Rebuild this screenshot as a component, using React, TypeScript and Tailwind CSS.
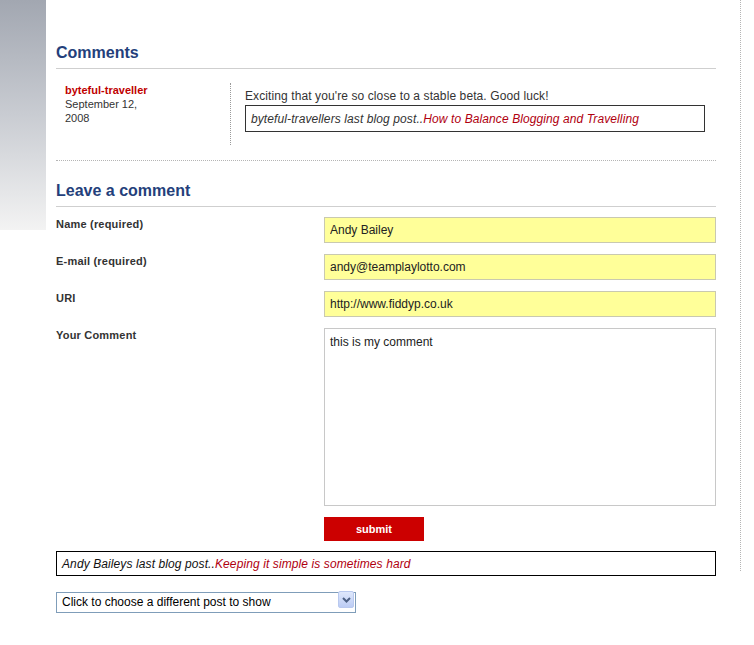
import { useState } from 'react';

export default function App() {
  const [name, setName] = useState('Andy Bailey');
  const [email, setEmail] = useState('andy@teamplaylotto.com');
  const [uri, setUri] = useState('http://www.fiddyp.co.uk');
  const [comment, setComment] = useState('this is my comment');

  return (
    <div className="w-[754px] min-h-[645px] bg-white flex items-start font-['Liberation_Sans',Arial,sans-serif] text-[#333]">
      {/* Left gradient strip */}
      <div className="w-[46px] h-[230px] shrink-0 bg-gradient-to-b from-[#a2a7b1] via-[#c9ccd2] to-[#f3f3f3]" />

      <div className="w-[695px] h-[571px] pl-[10px] pr-[24px] pt-[43px] border-r border-dotted border-[#b5b5b5]">
        {/* Comments */}
        <h2 className="text-[16px] leading-[20px] font-bold text-[#243f7b] pb-[5px] border-b border-[#cfcfcf]">Comments</h2>

        <div className="flex mt-[14px]">
          <div className="w-[175px] h-[62px] pl-[9px] border-r border-dotted border-[#9a9a9a] text-[11px] leading-[14px]">
            <div className="font-bold text-[#c00000]">byteful-traveller</div>
            <div>September 12,</div>
            <div>2008</div>
          </div>
          <div className="pl-[14px] pt-[5px]">
            <p className="text-[12px] leading-[16px] tracking-[0.1px]">Exciting that you're so close to a stable beta. Good luck!</p>
            <div className="mt-[1px] w-[460px] h-[27px] border border-[#333] pl-[5px] flex items-center text-[12px] italic tracking-[0.1px]">
              <span>byteful-travellers last blog post..</span>
              <span className="text-[#b0000f]">How to Balance Blogging and Travelling</span>
            </div>
          </div>
        </div>

        <div className="mt-[15px] border-t border-dotted border-[#b5b5b5]" />

        {/* Leave a comment */}
        <h2 className="mt-[20px] text-[16px] leading-[20px] font-bold text-[#243f7b] pb-[5px] border-b border-[#cfcfcf]">Leave a comment</h2>

        <div className="mt-[10px] flex flex-col gap-[11px] w-[660px]">
          <div className="flex">
            <label className="w-[268px] text-[11px] leading-[14px] font-bold tracking-[0.2px]">Name (required)</label>
            <input value={name} onChange={(e) => setName(e.target.value)}
              className="w-[392px] h-[26px] px-[5px] border border-[#c9c9b0] bg-[#ffff99] text-[12px] text-[#222] outline-none" />
          </div>
          <div className="flex">
            <label className="w-[268px] text-[11px] leading-[14px] font-bold tracking-[0.2px]">E-mail (required)</label>
            <input value={email} onChange={(e) => setEmail(e.target.value)}
              className="w-[392px] h-[26px] px-[5px] border border-[#c9c9b0] bg-[#ffff99] text-[12px] text-[#222] outline-none" />
          </div>
          <div className="flex">
            <label className="w-[268px] text-[11px] leading-[14px] font-bold tracking-[0.2px]">URI</label>
            <input value={uri} onChange={(e) => setUri(e.target.value)}
              className="w-[392px] h-[26px] px-[5px] border border-[#c9c9b0] bg-[#ffff99] text-[12px] text-[#222] outline-none" />
          </div>
          <div className="flex">
            <label className="w-[268px] text-[11px] leading-[14px] font-bold tracking-[0.2px]">Your Comment</label>
            <textarea value={comment} onChange={(e) => setComment(e.target.value)}
              className="w-[392px] h-[178px] px-[5px] py-[5px] border border-[#c8c8c8] bg-white text-[12px] leading-[16px] text-[#222] outline-none resize-none" />
          </div>
          <div className="flex">
            <div className="w-[268px]" />
            <button className="w-[100px] h-[24px] bg-[#cc0000] text-white text-[11px] font-bold">submit</button>
          </div>
        </div>

        <div className="mt-[10px] w-[660px] h-[25px] border border-black pl-[5px] flex items-center text-[12px] italic tracking-[0.1px]">
          <span className="text-[#111]">Andy Baileys last blog post..</span>
          <span className="text-[#b0000f]">Keeping it simple is sometimes hard</span>
        </div>

        <div className="relative mt-[13px] w-[300px] h-[21px]">
          <select className="appearance-none w-full h-full border border-[#7f9db9] bg-white pl-[5px] text-[12px] text-black outline-none">
            <option>Click to choose a different post to show</option>
          </select>
          <div className="absolute right-[2px] top-[2px] w-[16px] h-[17px] rounded-[2px] border border-[#b9c9ef] bg-gradient-to-b from-[#dfe8fc] to-[#bcccf4] flex items-center justify-center pointer-events-none">
            <svg width="9" height="6" viewBox="0 0 9 6">
              <path d="M1 1 L4.5 4.5 L8 1" fill="none" stroke="#4d6185" strokeWidth="2" />
            </svg>
          </div>
        </div>
      </div>
    </div>
  );
}
